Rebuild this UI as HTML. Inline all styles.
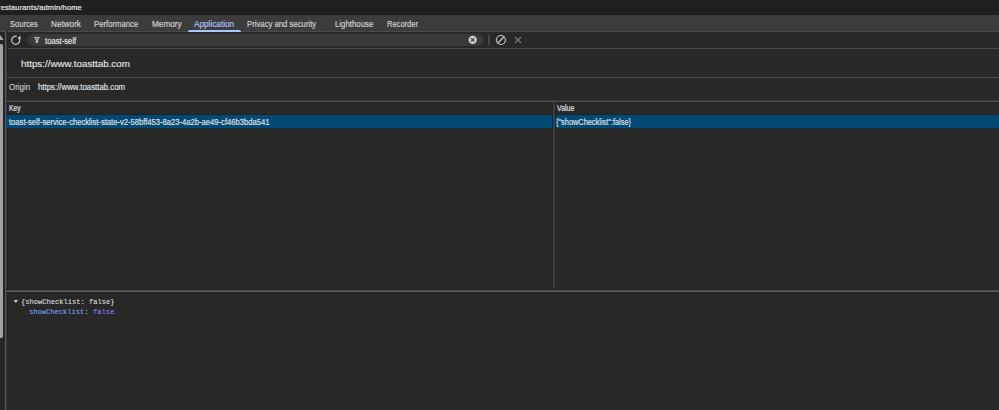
<!DOCTYPE html>
<html><head><meta charset="utf-8">
<style>
html,body{margin:0;padding:0;width:999px;height:410px;overflow:hidden;background:#282828;font-family:"Liberation Sans",sans-serif;color:#e3e3e3}
.abs{position:absolute}
.t{position:absolute;line-height:1;white-space:pre;transform-origin:0 0;-webkit-text-stroke:0.15px currentColor}
#top{left:0;top:0;width:999px;height:15px;background:#1f1f1f}
#tabs{left:0;top:15px;width:999px;height:16px;background:#3c3c3c}
#tabline{left:0;top:31px;width:999px;height:1px;background:#4a4a4a}
#uline{left:188px;top:30px;width:53px;height:2px;background:#a8c7fa;border-radius:2px 2px 0 0}
#tbline{left:6px;top:48px;width:993px;height:1px;background:#474747}
#pill{left:27px;top:34px;width:457px;height:12px;background:#3a3a3a;border-radius:7px}
#sep{left:488px;top:35px;width:2px;height:10px;background:#444}
#sb{left:0;top:32px;width:5px;height:378px;background:#262626}
#sbthumb{left:0;top:44px;width:3.2px;height:294px;background:#a3a3a3;border-radius:0 2px 2px 0}
#vline{left:5px;top:31px;width:1px;height:379px;background:#575757;box-shadow:1px 0 0 #3a3a3a,2px 0 0 #242424}
#l77{left:6px;top:77px;width:993px;height:1px;background:#474747}
#l101{left:6px;top:100px;width:993px;height:2px;background:linear-gradient(#3a3a3a 50%,#4a4a4a 50%)}
#l114{left:6px;top:113.5px;width:993px;height:1px;background:#222}
#sel{left:6px;top:114.5px;width:993px;height:13px;background:#004a77}
#coldiv{left:553px;top:102px;width:2px;height:188px;background:#3d3d3d;box-shadow:-1px 0 0 #242424,1px 0 0 #242424}
#coldiv2{left:553px;top:114.5px;width:2px;height:13px;background:#1d4866}
#l291{left:6px;top:290px;width:993px;height:2px;background:linear-gradient(#4d4d4d 50%,#5a5a5a 50%);box-shadow:0 -1px 0 #232323,0 1px 0 #232323}
</style></head><body>
<div class="abs" id="top"></div>
<div class="abs" id="tabs"></div>
<div class="abs" id="tabline"></div>
<div class="abs" id="uline"></div>
<div class="abs" id="tbline"></div>
<div class="abs" id="pill"></div>
<svg class="abs" style="left:9px;top:33px" width="14" height="14" viewBox="0 0 14 14"><path d="M7.75 3.34A4.05 4.05 0 1 0 10.4 5.6" fill="none" stroke="#d0d0d0" stroke-width="1.15"/><path d="M8.3 5.7L11.5 2.6V5.9z" fill="#d8d8d8"/></svg>
<svg class="abs" style="left:33px;top:36px" width="8" height="9" viewBox="0 0 8 9"><path fill-rule="evenodd" d="M0.8 0.9H6.9L5.0 4.3V7.1H2.8V4.3zM2.8 1.9H4.9L3.85 3.4z" fill="#b8b8b8"/></svg>
<svg class="abs" style="left:468px;top:35.4px" width="10" height="10" viewBox="0 0 10 10"><circle cx="4.7" cy="4.9" r="4.15" fill="#d0d0d0"/><path d="M3 3.2L6.4 6.6M6.4 3.2L3 6.6" stroke="#3a3a3a" stroke-width="1.2"/></svg>
<div class="abs" id="sep"></div>
<svg class="abs" style="left:495px;top:34.3px" width="12" height="12" viewBox="0 0 12 12"><circle cx="5.9" cy="6" r="4.5" fill="none" stroke="#c7c7c7" stroke-width="1.15"/><path d="M9.1 2.8L2.7 9.2" stroke="#c7c7c7" stroke-width="1.3"/></svg>
<svg class="abs" style="left:512.9px;top:35.3px" width="10" height="10" viewBox="0 0 10 10"><path d="M2 2L8 8M8 2L2 8" stroke="#7c7c7c" stroke-width="1.1"/></svg>
<div class="abs" id="sb"></div>
<svg class="abs" style="left:0;top:34px" width="5" height="7" viewBox="0 0 5 7"><path d="M-3 6L0.6 1.2L3.6 6z" fill="#a3a3a3"/></svg>
<div class="abs" id="sbthumb"></div>
<div class="abs" id="vline"></div>
<div class="abs" id="l77"></div>
<div class="abs" id="l101"></div>
<div class="abs" id="l114"></div>
<div class="abs" id="sel"></div>
<div class="abs" id="coldiv"></div>
<div class="abs" id="coldiv2"></div>
<div class="abs" id="l291"></div>
<svg class="abs" style="left:13px;top:299px" width="6" height="5" viewBox="0 0 6 5"><path d="M0.5 1H5.2L2.85 3.9z" fill="#c7c7c7"/></svg>
<div class="t" style="left:-1.69px;top:3.80px;font-family:'Liberation Sans';font-size:7.9px;color:#f0f0f0;transform:scaleX(0.9566);letter-spacing:0.12px">restaurants/admin/home</div>
<div class="t" style="left:10.35px;top:20.00px;font-family:'Liberation Sans';font-size:8.4px;color:#d4d4d4;transform:scaleX(0.9016);">Sources</div>
<div class="t" style="left:50.96px;top:20.00px;font-family:'Liberation Sans';font-size:8.4px;color:#d4d4d4;transform:scaleX(0.9749);">Network</div>
<div class="t" style="left:94.12px;top:20.00px;font-family:'Liberation Sans';font-size:8.4px;color:#d4d4d4;transform:scaleX(0.9236);">Performance</div>
<div class="t" style="left:151.87px;top:20.00px;font-family:'Liberation Sans';font-size:8.4px;color:#d4d4d4;transform:scaleX(0.9807);">Memory</div>
<div class="t" style="left:193.64px;top:20.00px;font-family:'Liberation Sans';font-size:8.4px;color:#a8c7fa;transform:scaleX(0.9790);">Application</div>
<div class="t" style="left:246.66px;top:20.00px;font-family:'Liberation Sans';font-size:8.4px;color:#d4d4d4;transform:scaleX(0.9232);">Privacy and security</div>
<div class="t" style="left:335.33px;top:20.00px;font-family:'Liberation Sans';font-size:8.4px;color:#d4d4d4;transform:scaleX(0.9330);">Lighthouse</div>
<div class="t" style="left:386.77px;top:20.00px;font-family:'Liberation Sans';font-size:8.4px;color:#d4d4d4;transform:scaleX(0.8981);">Recorder</div>
<div class="t" style="left:45.04px;top:36.80px;font-family:'Liberation Sans';font-size:8.4px;color:#e3e3e3;transform:scaleX(0.9191);">toast-self</div>
<div class="t" style="left:20.55px;top:59.00px;font-family:'Liberation Sans';font-size:9.9px;color:#e3e3e3;transform:scaleX(0.9917);">https://www.toasttab.com</div>
<div class="t" style="left:8.99px;top:82.90px;font-family:'Liberation Sans';font-size:8.4px;color:#c7c7c7;transform:scaleX(0.9443);">Origin</div>
<div class="t" style="left:38.11px;top:82.90px;font-family:'Liberation Sans';font-size:8.4px;color:#e3e3e3;transform:scaleX(0.9356);">https://www.toasttab.com</div>
<div class="t" style="left:9.21px;top:104.10px;font-family:'Liberation Sans';font-size:8.4px;color:#e3e3e3;transform:scaleX(0.8001);">Key</div>
<div class="t" style="left:556.72px;top:104.10px;font-family:'Liberation Sans';font-size:8.4px;color:#e3e3e3;transform:scaleX(0.8316);">Value</div>
<div class="t" style="left:8.52px;top:118.00px;font-family:'Liberation Sans';font-size:8.4px;color:#e3e3e3;transform:scaleX(0.9099);">toast-self-service-checklist-state-v2-58bff453-8a23-4a2b-ae49-cf46b3bda541</div>
<div class="t" style="left:556.48px;top:118.00px;font-family:'Liberation Sans';font-size:8.4px;color:#e3e3e3;transform:scaleX(0.8813);">{"showChecklist":false}</div>
<div class="t" style="left:20.62px;top:298.70px;font-family:'Liberation Mono';font-size:7.6px;color:#e3e3e3;transform:scaleX(0.9336);-webkit-text-stroke:0.05px currentColor">{showChecklist: false}</div>
<div class="t" style="left:28.57px;top:309.30px;font-family:'Liberation Mono';font-size:7.6px;color:#e3e3e3;transform:scaleX(0.9344);-webkit-text-stroke:0.05px currentColor"><span style="color:#7cacf8">showChecklist</span>: <span style="color:#9980ff">false</span></div>
</body></html>
